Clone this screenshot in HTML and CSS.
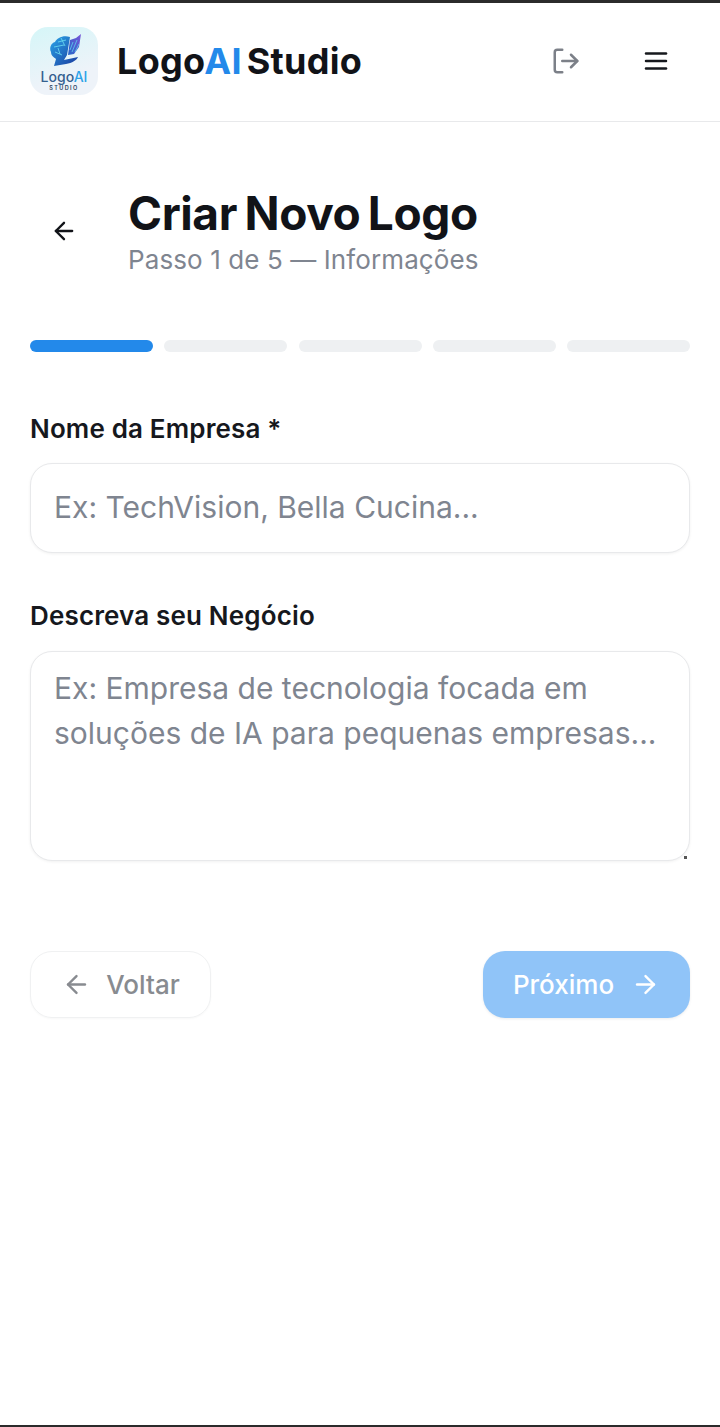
FILE: index.html
```html
<!DOCTYPE html>
<html lang="pt-BR">
<head>
  <meta charset="UTF-8" />
  <meta name="viewport" content="width=device-width, initial-scale=1" />
  <title>LogoAI Studio</title>
  <link rel="stylesheet" href="styles.css">
</head>
<body>
  <div id="screen">
    <!-- Top bar -->
    <header id="topbar">
      <div class="brand">
        <div class="brand-icon">
          <svg class="brand-art" viewBox="0 0 68 40" width="68" height="40">
            <defs>
              <linearGradient id="brainLeft" x1="0" y1="0" x2="1" y2="1">
                <stop offset="0" stop-color="#2aa5e8" />
                <stop offset="1" stop-color="#1a3a9e" />
              </linearGradient>
              <linearGradient id="brainRight" x1="1" y1="0" x2="0" y2="1">
                <stop offset="0" stop-color="#7a55d8" />
                <stop offset="1" stop-color="#2467c8" />
              </linearGradient>
            </defs>
            <path d="M40 6 C33 4 27 7 25 11 C21 12 19 17 21 21 C21 25 24 26 26 28 L24 35 L36 33 C42 32 47 29 48 26 L34 29 L37 24 Z" fill="url(#brainLeft)" />
            <path d="M38 24 L40 9 L46 7 L51 3 L49 16 L44 23 Z" fill="url(#brainRight)" />
            <path d="M42 21 L47 9 M40 19 L43 11 M45 21 L49 13" stroke="#5fd0ee" stroke-width="0.8" fill="none" />
            <path d="M28 11 L36 9 M24 16 L34 14 M25 21 L32 24 M31 7 L35 15 M28 17 L30 23" stroke="#6fe0f2" stroke-width="0.8" fill="none" />
          </svg>
          <div class="brand-icon-name">Logo<span class="brand-icon-ai">AI</span></div>
          <div class="brand-icon-sub">STUDIO</div>
        </div>
        <div class="brand-name">Logo<span class="accent">AI</span> Studio</div>
      </div>
      <div class="topbar-actions">
        <button class="icon-btn logout" aria-label="Sair">
          <svg class="icon" viewBox="0 0 24 24" width="30" height="30"><path d="M9 21H5a2 2 0 0 1-2-2V5a2 2 0 0 1 2-2h4" /><path d="m16 17 5-5-5-5" /><path d="M21 12H9" /></svg>
        </button>
        <button class="icon-btn menu" aria-label="Menu">
          <svg class="icon" viewBox="0 0 24 24" width="30" height="30"><path d="M4 6h16" /><path d="M4 12h16" /><path d="M4 18h16" /></svg>
        </button>
      </div>
    </header>

    <main id="content">
      <!-- Page heading -->
      <div class="page-head">
        <button class="icon-btn back" aria-label="Voltar">
          <svg class="icon" viewBox="0 0 24 24" width="28" height="28"><path d="m12 19-7-7 7-7" /><path d="M19 12H5" /></svg>
        </button>
        <div>
          <h1>Criar Novo Logo</h1>
          <p class="step">Passo 1 de 5 — Informações</p>
        </div>
      </div>

      <!-- Progress -->
      <div class="progress">
        <span class="active"></span>
        <span></span>
        <span></span>
        <span></span>
        <span></span>
      </div>

      <!-- Form -->
      <div class="field">
        <label for="company">Nome da Empresa *</label>
        <input id="company" type="text" placeholder="Ex: TechVision, Bella Cucina..." />
      </div>
      <div class="field">
        <label for="about">Descreva seu Negócio</label>
        <div class="textarea-wrap">
          <textarea id="about" placeholder="Ex: Empresa de tecnologia focada em soluções de IA para pequenas empresas..."></textarea>
          <span class="grip"></span>
        </div>
      </div>

      <div class="nav-buttons">
        <button class="btn btn-back">
          <svg class="icon" viewBox="0 0 24 24" width="29" height="29"><path d="m12 19-7-7 7-7" /><path d="M19 12H5" /></svg>
          Voltar
        </button>
        <button class="btn btn-next">
          Próximo
          <svg class="icon" viewBox="0 0 24 24" width="29" height="29"><path d="M5 12h14" /><path d="m12 5 7 7-7 7" /></svg>
        </button>
      </div>
    </main>
  </div>
</body>
</html>
```

FILE: styles.css
```css
/* Basic resets */
html, body {
  margin: 0;
  padding: 0;
  height: 100%;
  background: #fff;
  font-family: "Inter", "Liberation Sans", sans-serif;
  color: #111318;
}

#screen {
  height: 1427px;
  box-sizing: border-box;
  border-top: 3px solid #2b2b2b;
  border-bottom: 2px solid #2b2b2b;
  display: flex;
  flex-direction: column;
  overflow: hidden;
}

button {
  font-family: inherit;
  background: none;
  border: none;
  padding: 0;
}

.icon path {
  fill: none;
  stroke: currentColor;
  stroke-width: 2;
  stroke-linecap: round;
  stroke-linejoin: round;
}

/* Top bar */
#topbar {
  height: 119px;
  flex: none;
  box-sizing: border-box;
  border-bottom: 1px solid #e8e9eb;
  padding: 0 49px 3px 30px;
  display: flex;
  align-items: center;
  justify-content: space-between;
}

.brand {
  display: flex;
  align-items: center;
  gap: 19px;
}

.brand-icon {
  width: 68px;
  height: 68px;
  border-radius: 18px;
  background: linear-gradient(160deg, #d5f6f8, #eef3f9 70%);
  display: flex;
  flex-direction: column;
  align-items: center;
  overflow: hidden;
}

.brand-art {
  flex: none;
  margin-top: 4px;
}

.brand-icon-name {
  font-size: 14px;
  line-height: 14px;
  font-weight: 500;
  color: #35608f;
  margin-top: -1px;
}

.brand-icon-ai {
  color: #2ea3e8;
}

.brand-icon-sub {
  font-size: 5.5px;
  line-height: 8px;
  font-weight: 600;
  letter-spacing: 1.4px;
  color: #2a3f5c;
}

.brand-name {
  font-size: 36px;
  font-weight: 700;
  letter-spacing: 0.3px;
  word-spacing: -4px;
  color: #111318;
}

.accent {
  color: #2389ea;
}

.topbar-actions {
  display: flex;
  align-items: center;
  gap: 60px;
}

.icon-btn {
  display: flex;
}

.logout {
  color: #7c8088;
}

.menu {
  color: #16181d;
}

/* Main content */
#content {
  padding: 0 30px;
  display: flex;
  flex-direction: column;
}

.page-head {
  display: flex;
  align-items: center;
  gap: 50px;
  padding: 63px 0 0 20px;
}

.page-head h1 {
  margin: 0;
  font-size: 46px;
  line-height: 56px;
  font-weight: 700;
  letter-spacing: -0.4px;
  word-spacing: -3px;
  color: #111318;
}

.step {
  margin: 1px 0 -1px;
  font-size: 26px;
  line-height: 36px;
  letter-spacing: 0.1px;
  color: #7f8590;
}

.back {
  color: #111318;
}

/* Progress bar */
.progress {
  display: flex;
  gap: 11.25px;
  margin-top: 63px;
}

.progress span {
  flex: 1;
  height: 12px;
  border-radius: 6px;
  background: #eef0f2;
}

.progress .active {
  background: #2389ea;
}

/* Form fields */
.field {
  display: flex;
  flex-direction: column;
  margin-top: 60px;
}

.field + .field {
  margin-top: 46px;
}

.field label {
  font-size: 26px;
  line-height: 34px;
  font-weight: 600;
  letter-spacing: 0.15px;
  color: #16181d;
  margin-bottom: 17px;
}

.field + .field label {
  margin-bottom: 18px;
}

.field input,
.field textarea {
  box-sizing: border-box;
  width: 100%;
  border: 1px solid #e8e9eb;
  border-radius: 22px;
  background: #fff;
  box-shadow: 0 1px 3px rgba(0, 0, 0, 0.06);
  padding: 0 23px;
  font-family: inherit;
  font-size: 30px;
  color: #111318;
  outline: none;
}

.field input {
  height: 90px;
  padding-bottom: 2px;
}

.field textarea {
  height: 210px;
  padding-top: 14px;
  line-height: 45px;
  resize: none;
  display: block;
}

.field input::placeholder,
.field textarea::placeholder {
  color: #7f8590;
  opacity: 1;
}

.textarea-wrap {
  position: relative;
}

/* leftover corner of the resize handle */
.grip {
  position: absolute;
  right: 3px;
  bottom: 2px;
  width: 3px;
  height: 3px;
  background: #555;
  pointer-events: none;
}

/* Back / next */
.nav-buttons {
  display: flex;
  justify-content: space-between;
  margin-top: 90px;
}

.btn {
  height: 67px;
  box-sizing: border-box;
  border-radius: 22px;
  display: flex;
  align-items: center;
  justify-content: center;
  font-size: 26px;
  font-weight: 500;
}

.btn-back {
  width: 181px;
  gap: 15px;
  padding-left: 1px;
  color: #888b90;
  border: 1px solid #f0f1f2;
  box-shadow: 0 1px 2px rgba(0, 0, 0, 0.03);
}

.btn-next {
  width: 207px;
  gap: 17px;
  background: #90c4f8;
  color: #fff;
  box-shadow: 0 1px 3px rgba(0, 0, 0, 0.08);
}
```
